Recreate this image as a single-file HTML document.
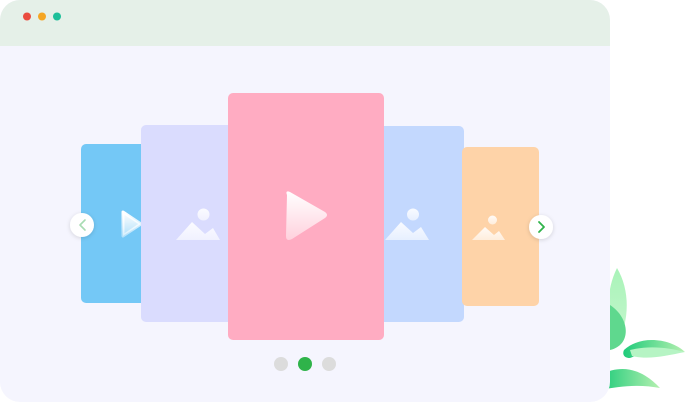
<!DOCTYPE html>
<html><head><meta charset="utf-8"><style>
html,body{margin:0;padding:0;background:#fff;width:686px;height:414px;overflow:hidden}
</style></head><body>
<svg width="686" height="414" viewBox="0 0 686 414" xmlns="http://www.w3.org/2000/svg">
<defs>
<linearGradient id="pl" x1="0" y1="0" x2="0" y2="1"><stop offset="0" stop-color="#fff"/><stop offset="1" stop-color="#fff" stop-opacity="0.45"/></linearGradient>
<linearGradient id="mt" x1="0" y1="0" x2="0" y2="1"><stop offset="0" stop-color="#fff" stop-opacity="0.9"/><stop offset="1" stop-color="#fff" stop-opacity="0.6"/></linearGradient>
<linearGradient id="lf" x1="0" y1="0" x2="1" y2="0"><stop offset="0" stop-color="#1fcb7a"/><stop offset="1" stop-color="#b5f0b0"/></linearGradient>
<linearGradient id="lf2" x1="0" y1="0" x2="0" y2="1"><stop offset="0" stop-color="#a9f3b8"/><stop offset="1" stop-color="#c6f7cf"/></linearGradient>
<filter id="sh" x="-50%" y="-50%" width="200%" height="200%"><feDropShadow dx="0" dy="1" stdDeviation="2" flood-color="#000" flood-opacity="0.15"/></filter>
<clipPath id="win"><rect x="0" y="0" width="610" height="402" rx="20"/></clipPath>
</defs>
<!-- leaves behind -->
<path d="M617 268 C630 290 630 320 617 345 C605 320 606 290 617 268Z" fill="url(#lf2)"/>
<path d="M610 305 C630 318 632 345 610 350Z" fill="#5fd88e"/>
<path d="M624 350 C640 335 670 338 685 352 C665 348 645 352 630 358 C624 358 622 354 624 350Z" fill="url(#lf)"/>
<path d="M630 350 C650 345 670 348 685 352 C665 356 648 360 632 356Z" fill="#b6f4c4"/>
<path d="M600 375 C625 362 645 372 660 388 C640 384 620 386 600 390Z" fill="url(#lf)"/>
<g clip-path="url(#win)">
<rect x="0" y="0" width="610" height="402" fill="#f5f5fe"/>
<rect x="0" y="0" width="610" height="46" fill="#e5f0e8"/>
</g>
<circle cx="27" cy="16.5" r="4" fill="#ea4c3f"/>
<circle cx="42" cy="16.5" r="4" fill="#f5a623"/>
<circle cx="57" cy="16.5" r="4" fill="#1dbf99"/>
<!-- cards -->
<rect x="81" y="144" width="80" height="159" rx="5" fill="#74c8f6"/>
<path d="M123 212 L141 224 L123 236Z" fill="url(#pl)" stroke="url(#pl)" stroke-width="3" stroke-linejoin="round"/>
<rect x="141" y="125" width="100" height="197" rx="5" fill="#dadcfe"/>
<g fill="url(#mt)"><circle cx="203.5" cy="214.5" r="6"/><path d="M176 240 L192 222 L205 234 L213 228 L220 240Z"/></g>
<rect x="372" y="126" width="92" height="196" rx="5" fill="#c3d8fe"/>
<g fill="url(#mt)"><circle cx="413" cy="214.5" r="6"/><path d="M385 240 L401 222 L413 233 L421 227 L429 240Z"/></g>
<rect x="462" y="147" width="77" height="159" rx="5" fill="#fed3a8"/>
<g fill="url(#mt)"><circle cx="492.5" cy="220" r="4.5"/><path d="M472 240 L485 227 L494 235 L499 231 L505 240Z"/></g>
<rect x="228" y="93" width="156" height="247" rx="5" fill="#ffacc2"/>
<path d="M287 195 Q285 190 290 192 L325 212 Q329 215 325 218 L292 239 Q286 242 286 236Z" fill="url(#pl)"/>
<!-- arrows -->
<circle cx="82" cy="225" r="12" fill="#fff" filter="url(#sh)"/>
<path d="M85 220 L80 225 L85 230" fill="none" stroke="#a8dcb3" stroke-width="1.6" stroke-linecap="round" stroke-linejoin="round"/>
<circle cx="541" cy="227" r="12" fill="#fff" filter="url(#sh)"/>
<path d="M539 222 L544 227 L539 232" fill="none" stroke="#2fb34a" stroke-width="1.8" stroke-linecap="round" stroke-linejoin="round"/>
<!-- dots -->
<circle cx="281" cy="364" r="7" fill="#dcdcdc"/>
<circle cx="305" cy="364" r="7" fill="#2fb34a"/>
<circle cx="329" cy="364" r="7" fill="#dcdcdc"/>
</svg>
</body></html>
